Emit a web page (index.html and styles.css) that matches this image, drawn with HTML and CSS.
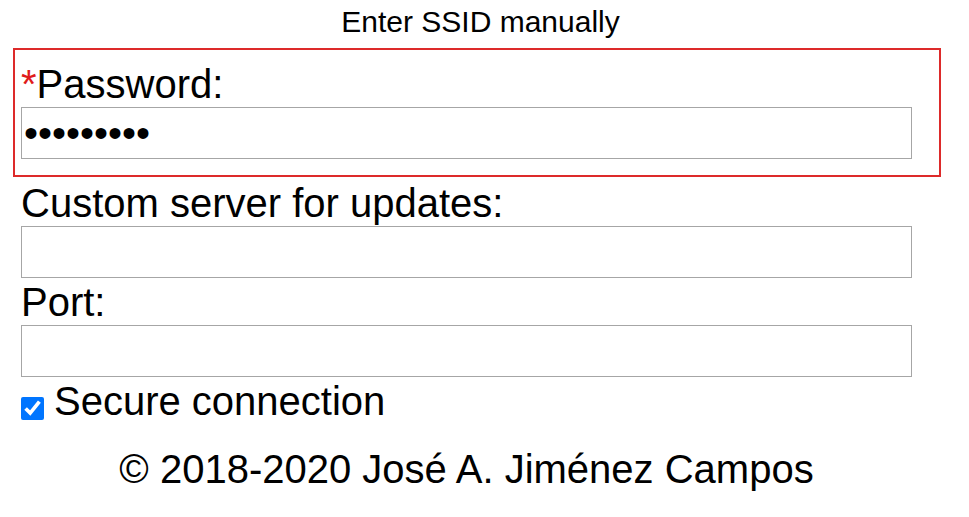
FILE: index.html
```html
<!DOCTYPE html>
<html>
<head>
<meta charset="utf-8">
<link rel="stylesheet" href="styles.css">
</head>
<body>
<div class="title"><a class="ssid-link" href="#">Enter SSID manually</a></div>
<div class="page">
  <div class="field field-error">
    <label class="label"><span class="req">*</span>Password:</label>
    <input class="input" type="password" value="123456789">
  </div>
  <div class="field">
    <label class="label">Custom server for updates:</label>
    <input class="input" type="text" value="">
  </div>
  <div class="field">
    <label class="label">Port:</label>
    <input class="input" type="text" value="">
  </div>
  <label class="check-row"><input class="check" type="checkbox" checked><span>Secure connection</span></label>
  <div class="footer">© 2018-2020 José A. Jiménez Campos</div>
</div>
</body>
</html>
```
FILE: styles.css
```css
html, body {
  margin: 0;
  padding: 0;
  background: #ffffff;
}
body {
  font-family: "Liberation Sans", Arial, sans-serif;
  color: #000000;
  padding-top: 5px;
}
.title {
  width: 961px;
  text-align: center;
  font-size: 30px;
  margin-bottom: 9px;
}
.ssid-link {
  color: #000000;
  text-decoration: none;
}
.page {
  width: 891px;
  padding-left: 21px;
  font-size: 40px;
}
.field {
  display: flex;
  flex-direction: column;
}
.field-error {
  border: 2px solid #dd2a2a;
  margin: 0 -29px 3px -8px;
  padding: 11px 27px 16px 6px;
}
.label {
  display: block;
  line-height: 46px;
}
.req {
  color: #e01b1b;
}
.input {
  box-sizing: border-box;
  width: 100%;
  height: 52px;
  margin: 0 0 1px 0;
  padding: 2px 2px;
  border: 1px solid #a6a6a6;
  font-family: inherit;
  font-size: 40px;
  color: #000;
  background: #fff;
  outline: none;
}
.field-error .input {
  margin-bottom: 0;
}
.check-row {
  display: flex;
  align-items: flex-start;
  line-height: 46px;
}
.check {
  width: 23px;
  height: 23px;
  margin: 19px 10px 0 0;
  flex: none;
}
.footer {
  margin-top: 22px;
  line-height: 46px;
  text-align: center;
}
```
